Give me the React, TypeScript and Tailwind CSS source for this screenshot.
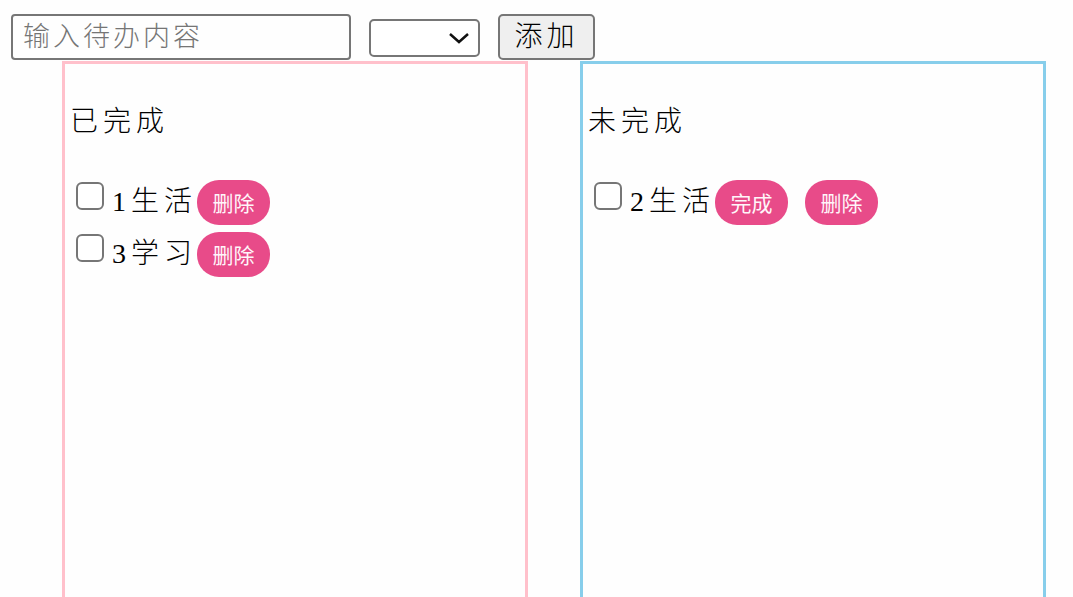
import { useState } from 'react';

type Todo = { id: number; type: string; done: boolean };

const serif = 'font-["Liberation_Serif","Noto_Sans_CJK_SC",serif]';

function PillButton({ children }: { children: string }) {
  return (
    <button className="h-[45px] w-[73px] rounded-[22px] bg-[#e84b89] text-[21px] text-[#fff5f9] font-['Noto_Sans_CJK_SC',sans-serif] leading-none">
      {children}
    </button>
  );
}

function TodoRow({ todo }: { todo: Todo }) {
  return (
    <div className="flex h-[52px] items-start">
      <input
        type="checkbox"
        defaultChecked={false}
        className="mt-[1px] ml-[6px] h-[28px] w-[28px] appearance-none rounded-[6px] border-[2.5px] border-[#767676] bg-white"
      />
      <span className={`${serif} ml-[8px] mt-[3px] text-[28px] font-light leading-[36px] tracking-[5px] text-black`}>
        {todo.id}
        {todo.type}
      </span>
      <div className="-mt-px flex gap-[17px]">
        {!todo.done && <PillButton>完成</PillButton>}
        <PillButton>删除</PillButton>
      </div>
    </div>
  );
}

function Column({ title, items, border }: { title: string; items: Todo[]; border: string }) {
  return (
    <div className={`h-[560px] w-[466px] border-[3px] ${border} px-[5px]`}>
      <h3 className={`${serif} mt-[38px] text-[28px] font-light leading-[40px] tracking-[5px] text-black`}>{title}</h3>
      <div className="mt-[39px]">
        {items.map((t) => (
          <TodoRow key={t.id} todo={t} />
        ))}
      </div>
    </div>
  );
}

export default function App() {
  const [todos] = useState<Todo[]>([
    { id: 1, type: '生活', done: true },
    { id: 2, type: '生活', done: false },
    { id: 3, type: '学习', done: true },
  ]);

  return (
    <div className="h-[597px] overflow-hidden bg-[#fefefe]">
      <div className="flex items-start pt-[14px] pl-[11px]">
        <input
          placeholder="输入待办内容"
          className={`${serif} h-[46px] w-[340px] rounded-[4px] border-2 border-[#767676] px-[10px] text-[27px] font-light tracking-[3px] placeholder:text-[#757575]`}
        />
        <div className="relative ml-[18px] mt-[5px] h-[38px] w-[111px] rounded-[5px] border-2 border-[#767676] bg-white">
          <svg className="absolute right-[8px] top-[10px]" width="22" height="14" viewBox="0 0 22 14" fill="none">
            <path d="M2 3l9 8 9-8" stroke="#111" strokeWidth="2.5" />
          </svg>
        </div>
        <button
          className={`${serif} ml-[18px] h-[46px] w-[97px] rounded-[5px] border-2 border-[#767676] bg-[#efefef] text-[28px] font-light tracking-[4px] text-black`}
        >
          添加
        </button>
      </div>
      <div className="ml-[62px] mt-px flex gap-[52px]">
        <Column title="已完成" items={todos.filter((t) => t.done)} border="border-[#ffc0cb]" />
        <Column title="未完成" items={todos.filter((t) => !t.done)} border="border-[#87ceeb]" />
      </div>
    </div>
  );
}
